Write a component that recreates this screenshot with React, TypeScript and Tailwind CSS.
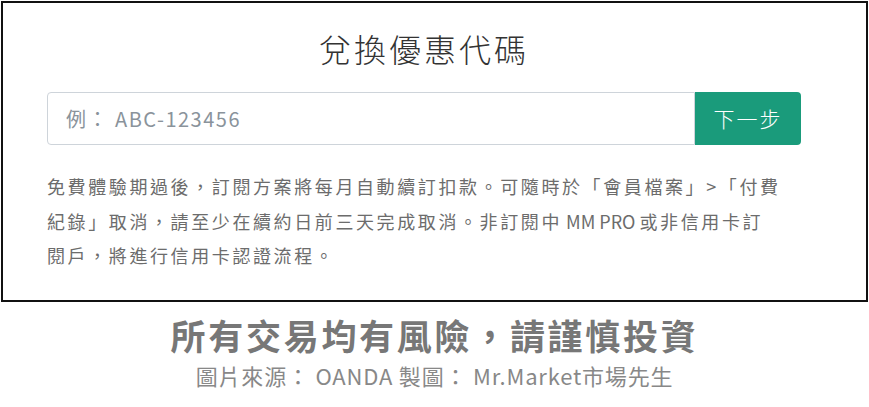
export default function App() {
  const font = { fontFamily: '"Noto Sans CJK TC", "Noto Sans", sans-serif' };
  return (
    <div className="w-[869px] h-[407px] bg-white" style={font}>
      <div className="mx-[1px] pt-[1px]">
        <div className="h-[301px] border-2 border-[#111111] pl-[44px] pr-[65px]">
          <h1 className="pt-[20px] text-center text-[32px] leading-[50px] tracking-[3px] font-light text-[#333333]">
            兌換優惠代碼
          </h1>
          <div className="mt-[19px] flex h-[53px]">
            <input
              className="flex-1 rounded-l-[4px] border border-[#ced4da] px-[18px] text-[20px] tracking-[1.5px] text-[#495057] placeholder:text-[#8a939b] outline-none"
              placeholder="例： ABC-123456"
            />
            <button className="w-[106px] rounded-r-[4px] bg-[#1a9b7b] text-[21px] tracking-[2px] font-light text-white">
              下一步
            </button>
          </div>
          <p className="mt-[24px] whitespace-nowrap text-[18px] leading-[34.5px] tracking-[2.6px] text-[#6c6c6c]">
            免費體驗期過後，訂閱方案將每月自動續訂扣款。可隨時於「會員檔案」{">"}「付費
            <br />
            紀錄」取消，請至少在續約日前三天完成取消。非訂閱中<span className="tracking-normal"> MM PRO </span>或非信用卡訂
            <br />
            閱戶，將進行信用卡認證流程。
          </p>
        </div>
      </div>
      <div className="pt-[10px] text-center">
        <div className="text-[35px] leading-[46px] font-bold tracking-[2.7px] text-[#777777]">
          所有交易均有風險，請謹慎投資
        </div>
        <div className="mt-[2px] text-[22px] leading-[30px] tracking-[0.8px] text-[#888888]">
          圖片來源： OANDA 製圖： Mr.Market市場先生
        </div>
      </div>
    </div>
  );
}
